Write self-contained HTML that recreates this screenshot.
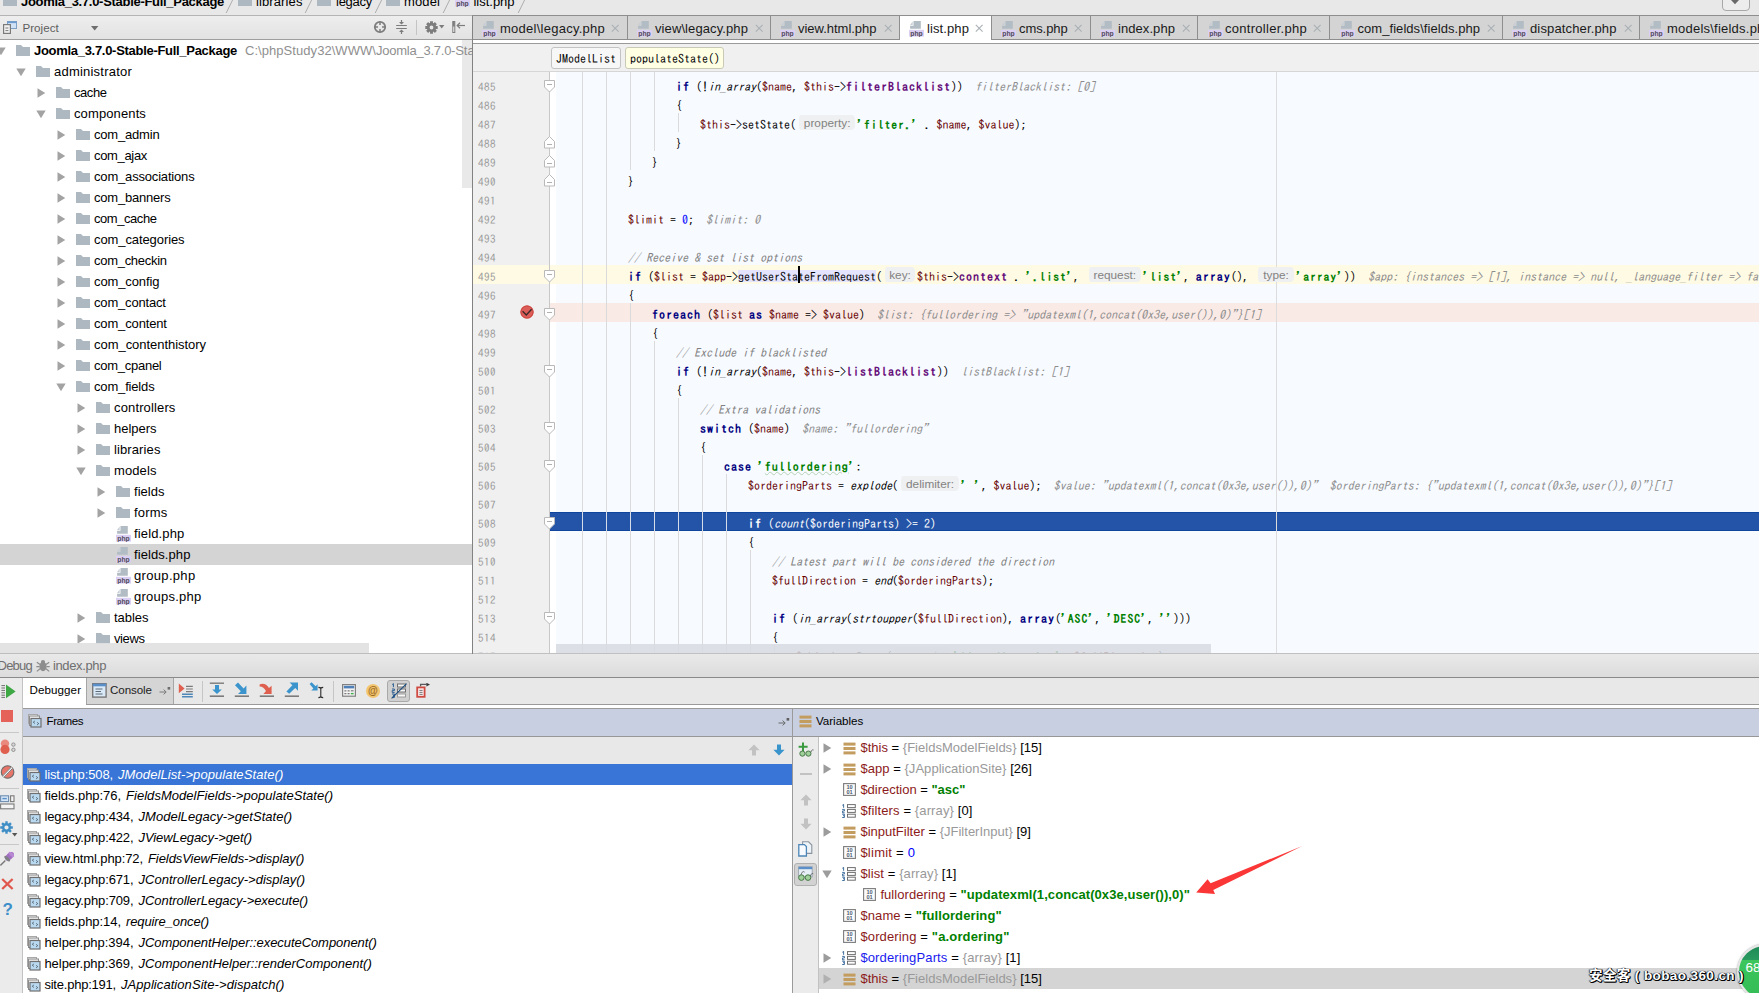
<!DOCTYPE html>
<html lang="en"><head><meta charset="utf-8"><title>PhpStorm debug - list.php</title>
<style>
html,body{margin:0;padding:0}
body{width:1759px;height:993px;overflow:hidden;position:relative;background:#ececec;font-family:"Liberation Sans",sans-serif;font-size:13px;color:#000}
.a{position:absolute;display:block}
.t{position:absolute;white-space:pre;line-height:21px;height:21px;font-size:13px}
.b{font-weight:bold}
.it{font-style:italic}
.s{font-size:11.6px}
.m{font-family:IPAGothic,"Liberation Mono",monospace;font-size:12px}
.ln{color:#999;line-height:19px;height:19px;font-size:11px;letter-spacing:.5px}
.cl{position:absolute;white-space:pre;font-family:IPAGothic,"Liberation Mono",monospace;font-size:12px;line-height:19px;height:19px;color:#000}
.cl .k{font-weight:bold;color:#000080;letter-spacing:1px}
.cl .v{color:#660000}
.cl .f{font-weight:bold;color:#660e7a;letter-spacing:1px}
.cl .s,.cl .sw{font-weight:bold;color:#008000;letter-spacing:1px}
.cl .sw{text-decoration:underline wavy #b5d1b5 1px;text-underline-offset:0px}
.cl .n{color:#0000ff}
.cl .c{font-style:italic;color:#808080}
.cl .i{font-style:italic}
.cl .u{background:#e4e4ff}
.cl .h{font-style:italic;color:#8c8c8c}
.ph{display:inline-block;box-sizing:border-box;height:15px;line-height:17px;vertical-align:top;margin-top:0;text-align:center;font-family:"Liberation Sans",sans-serif;font-size:11.8px;color:#828282;background:#eff0f1;background-clip:padding-box;border-left:3px solid transparent;border-right:2px solid transparent;border-radius:5px;letter-spacing:0}
.ex,.ex .k,.ex .v,.ex .n,.ex .i{color:#fff}
.vn{color:#8c1a1a}.vg{color:#999}.vs{color:#008000;font-weight:bold}.vb{color:#0000ff}.vc{color:#1a1aee}
.wm{font-family:"Liberation Sans","Noto Sans CJK SC",sans-serif;font-weight:bold;font-size:13.5px;color:#fff;text-shadow:1px 1px 0 #000,1px 0 0 #000,0 1px 0 #000,0 0 1px #000,-1px 0 1px rgba(0,0,0,.5)}
</style></head>
<body>
<div class="a" style="left:0px;top:0px;width:1759px;height:15px;background:#e8e8e8;"></div>
<div class="a" style="left:0px;top:15px;width:472px;height:1px;background:#b4b4b4;"></div>
<div class="a" style="left:472px;top:15px;width:1287px;height:1px;background:#8e8e8e;"></div>
<svg class="a" style="left:3px;top:-5px" width="14" height="11" viewBox="0 0 14 11"><path d="M0 0h5l2 2h7v9H0z" fill="#adb8c0"/></svg>
<span class="t b" style="left:21px;top:-9px;letter-spacing:-0.295px;">Joomla_3.7.0-Stable-Full_Package</span>
<svg class="a" style="left:225px;top:0px" width="9" height="14" viewBox="0 0 9 14"><path d="M7.6 0L1.2 13" stroke="#adadad" stroke-width="1" fill="none"/></svg>
<svg class="a" style="left:238px;top:-5px" width="14" height="11" viewBox="0 0 14 11"><path d="M0 0h5l2 2h7v9H0z" fill="#adb8c0"/></svg>
<span class="t " style="left:256px;top:-9px;letter-spacing:0.109px;">libraries</span>
<svg class="a" style="left:304px;top:0px" width="9" height="14" viewBox="0 0 9 14"><path d="M7.6 0L1.2 13" stroke="#adadad" stroke-width="1" fill="none"/></svg>
<svg class="a" style="left:317px;top:-5px" width="14" height="11" viewBox="0 0 14 11"><path d="M0 0h5l2 2h7v9H0z" fill="#adb8c0"/></svg>
<span class="t " style="left:336px;top:-9px;letter-spacing:-0.263px;">legacy</span>
<svg class="a" style="left:374px;top:0px" width="9" height="14" viewBox="0 0 9 14"><path d="M7.6 0L1.2 13" stroke="#adadad" stroke-width="1" fill="none"/></svg>
<svg class="a" style="left:386px;top:-5px" width="14" height="11" viewBox="0 0 14 11"><path d="M0 0h5l2 2h7v9H0z" fill="#adb8c0"/></svg>
<span class="t " style="left:404px;top:-9px;letter-spacing:0.116px;">model</span>
<svg class="a" style="left:442px;top:0px" width="9" height="14" viewBox="0 0 9 14"><path d="M7.6 0L1.2 13" stroke="#adadad" stroke-width="1" fill="none"/></svg>
<svg class="a" style="left:455px;top:-9px" width="15" height="16" viewBox="0 0 15 16"><path d="M4.5 0H11.8V7.7H1.1V4.7H4.5z" fill="#b2bcc4"/><path d="M1.1 3.9L3.7 0.5V3.9z" fill="#c6ced5"/><rect x="0" y="8.8" width="15" height="6.8" fill="#dccff4"/><text x="7.5" y="14.5" font-family="Liberation Sans,sans-serif" font-size="8" font-weight="bold" fill="#4f4a58" text-anchor="middle" textLength="12.4" lengthAdjust="spacingAndGlyphs">php</text></svg>
<span class="t " style="left:473.5px;top:-9px;letter-spacing:-0.025px;">list.php</span>
<svg class="a" style="left:517px;top:0px" width="9" height="14" viewBox="0 0 9 14"><path d="M7.6 0L1.2 13" stroke="#adadad" stroke-width="1" fill="none"/></svg>
<div class="a" style="left:1722px;top:-6px;width:28px;height:17px;background:#ededed;border:1px solid #a8a8a8;border-radius:4px;box-sizing:border-box;"></div>
<svg class="a" style="left:1730px;top:0px" width="10" height="5" viewBox="0 0 10 5"><path d="M1 0H9L5 4.2z" fill="#6a6a6a"/></svg>
<div class="a" style="left:0px;top:16px;width:472px;height:23px;background:linear-gradient(#eeeeee,#e2e2e2);"></div>
<div class="a" style="left:0px;top:39px;width:472px;height:1px;background:#9e9e9e;"></div>
<svg class="a" style="left:3px;top:20px" width="15" height="14" viewBox="0 0 15 14"><rect x="4.5" y="1.5" width="9" height="7" fill="#cfe2f5" stroke="#7d9fc4"/><rect x="4.5" y="1.5" width="9" height="1.6" fill="#6d9bd0"/><rect x="0.6" y="4.6" width="6.8" height="8.8" fill="#f2f2f2" stroke="#7a7a7a" stroke-width="1.2"/><path d="M2.4 8H5.4M2.4 10.6H5.4" stroke="#7a7a7a" stroke-width="1"/></svg>
<span class="t s" style="left:22.5px;top:16.5px;letter-spacing:0.015px;color:#5e5e5e;">Project</span>
<svg class="a" style="left:91px;top:26px" width="8" height="5" viewBox="0 0 8 5"><path d="M0 0H7.4L3.7 4.4z" fill="#6e6e6e"/></svg>
<svg class="a" style="left:373px;top:20px" width="14" height="14" viewBox="0 0 14 14"><circle cx="7" cy="7" r="5.2" fill="none" stroke="#7d7d7d" stroke-width="1.8"/><path d="M7 1.5V5M7 9V12.5M1.5 7H5M9 7H12.5" stroke="#7d7d7d" stroke-width="1.5"/></svg>
<svg class="a" style="left:395px;top:20px" width="13" height="14" viewBox="0 0 13 14"><path d="M1.2 5.5H11.8M1.2 8.5H11.8" stroke="#7d7d7d" stroke-width="1"/><path d="M6.5 0V4M6.5 10V14" stroke="#7d7d7d" stroke-width="1.2"/><path d="M4 2L6.5 4.6L9 2zM4 12L6.5 9.4L9 12z" fill="#7d7d7d"/></svg>
<div class="a" style="left:416px;top:20px;width:1px;height:15px;background:#c4c4c4;"></div>
<svg class="a" style="left:425px;top:20.5px" width="13" height="13" viewBox="0 0 13 13"><path d="M10.10 6.50L12.70 6.50M9.05 9.05L10.88 10.88M6.50 10.10L6.50 12.70M3.95 9.05L2.12 10.88M2.90 6.50L0.30 6.50M3.95 3.95L2.12 2.12M6.50 2.90L6.50 0.30M9.05 3.95L10.88 2.12" stroke="#7d7d7d" stroke-width="2.9"/><circle cx="6.5" cy="6.5" r="3.3" fill="none" stroke="#7d7d7d" stroke-width="2.8"/></svg>
<svg class="a" style="left:439px;top:25px" width="6" height="4" viewBox="0 0 6 4"><path d="M0 0H5.4L2.7 3.4z" fill="#7d7d7d"/></svg>
<svg class="a" style="left:452px;top:21px" width="14" height="12" viewBox="0 0 14 12"><rect x="0.8" y="0.5" width="2" height="11" fill="#f4f4f4" stroke="#7d7d7d" stroke-width="1"/><rect x="0.8" y="0.5" width="2" height="5" fill="#7d7d7d"/><path d="M5.5 4.5H13" stroke="#7d7d7d" stroke-width="1.2"/><path d="M8 1.8L5.2 4.5L8 7.2" stroke="#7d7d7d" stroke-width="1.2" fill="none"/></svg>
<div class="a" style="left:0px;top:40px;width:472px;height:613px;background:#ffffff;"></div>
<div class="a" style="left:462px;top:40px;width:10px;height:148px;background:#e9e9e9;"></div>
<svg class="a" style="left:-4px;top:47px" width="10" height="9" viewBox="0 0 10 9"><path d="M0.3 0.5H9.7L5 8.3z" fill="#a3a3a3"/></svg>
<svg class="a" style="left:16px;top:45px" width="14" height="11" viewBox="0 0 14 11"><path d="M0 0h5l2 2h7v9H0z" fill="#adb8c0"/></svg>
<span class="t b" style="left:34px;top:40px;letter-spacing:-0.295px;">Joomla_3.7.0-Stable-Full_Package</span>
<span class="t " style="left:245px;top:40px;letter-spacing:0.053px;color:#8f8f8f;">C:\phpStudy32\WWW\</span>
<span class="t " style="left:376px;top:40px;letter-spacing:-0.245px;color:#8f8f8f;">Joomla_3.7.0-</span>
<span class="t " style="left:455.2px;top:40px;color:#8f8f8f;">Stable-Full_Package</span>
<svg class="a" style="left:16px;top:68px" width="10" height="9" viewBox="0 0 10 9"><path d="M0.3 0.5H9.7L5 8.3z" fill="#a3a3a3"/></svg>
<svg class="a" style="left:36px;top:66px" width="14" height="11" viewBox="0 0 14 11"><path d="M0 0h5l2 2h7v9H0z" fill="#adb8c0"/></svg>
<span class="t " style="left:54px;top:61px;letter-spacing:0.22px;">administrator</span>
<svg class="a" style="left:37px;top:87.5px" width="9" height="10" viewBox="0 0 9 10"><path d="M0.5 0.3L8.3 5L0.5 9.7z" fill="#a3a3a3"/></svg>
<svg class="a" style="left:56px;top:87px" width="14" height="11" viewBox="0 0 14 11"><path d="M0 0h5l2 2h7v9H0z" fill="#adb8c0"/></svg>
<span class="t " style="left:74px;top:82px;letter-spacing:-0.441px;">cache</span>
<svg class="a" style="left:36px;top:110px" width="10" height="9" viewBox="0 0 10 9"><path d="M0.3 0.5H9.7L5 8.3z" fill="#a3a3a3"/></svg>
<svg class="a" style="left:56px;top:108px" width="14" height="11" viewBox="0 0 14 11"><path d="M0 0h5l2 2h7v9H0z" fill="#adb8c0"/></svg>
<span class="t " style="left:74px;top:103px;letter-spacing:0.117px;">components</span>
<svg class="a" style="left:57px;top:129.5px" width="9" height="10" viewBox="0 0 9 10"><path d="M0.5 0.3L8.3 5L0.5 9.7z" fill="#a3a3a3"/></svg>
<svg class="a" style="left:76px;top:129px" width="14" height="11" viewBox="0 0 14 11"><path d="M0 0h5l2 2h7v9H0z" fill="#adb8c0"/></svg>
<span class="t " style="left:94px;top:124px;letter-spacing:-0.189px;">com_admin</span>
<svg class="a" style="left:57px;top:150.5px" width="9" height="10" viewBox="0 0 9 10"><path d="M0.5 0.3L8.3 5L0.5 9.7z" fill="#a3a3a3"/></svg>
<svg class="a" style="left:76px;top:150px" width="14" height="11" viewBox="0 0 14 11"><path d="M0 0h5l2 2h7v9H0z" fill="#adb8c0"/></svg>
<span class="t " style="left:94px;top:145px;letter-spacing:-0.33px;">com_ajax</span>
<svg class="a" style="left:57px;top:171.5px" width="9" height="10" viewBox="0 0 9 10"><path d="M0.5 0.3L8.3 5L0.5 9.7z" fill="#a3a3a3"/></svg>
<svg class="a" style="left:76px;top:171px" width="14" height="11" viewBox="0 0 14 11"><path d="M0 0h5l2 2h7v9H0z" fill="#adb8c0"/></svg>
<span class="t " style="left:94px;top:166px;letter-spacing:-0.177px;">com_associations</span>
<svg class="a" style="left:57px;top:192.5px" width="9" height="10" viewBox="0 0 9 10"><path d="M0.5 0.3L8.3 5L0.5 9.7z" fill="#a3a3a3"/></svg>
<svg class="a" style="left:76px;top:192px" width="14" height="11" viewBox="0 0 14 11"><path d="M0 0h5l2 2h7v9H0z" fill="#adb8c0"/></svg>
<span class="t " style="left:94px;top:187px;letter-spacing:-0.207px;">com_banners</span>
<svg class="a" style="left:57px;top:213.5px" width="9" height="10" viewBox="0 0 9 10"><path d="M0.5 0.3L8.3 5L0.5 9.7z" fill="#a3a3a3"/></svg>
<svg class="a" style="left:76px;top:213px" width="14" height="11" viewBox="0 0 14 11"><path d="M0 0h5l2 2h7v9H0z" fill="#adb8c0"/></svg>
<span class="t " style="left:94px;top:208px;letter-spacing:-0.443px;">com_cache</span>
<svg class="a" style="left:57px;top:234.5px" width="9" height="10" viewBox="0 0 9 10"><path d="M0.5 0.3L8.3 5L0.5 9.7z" fill="#a3a3a3"/></svg>
<svg class="a" style="left:76px;top:234px" width="14" height="11" viewBox="0 0 14 11"><path d="M0 0h5l2 2h7v9H0z" fill="#adb8c0"/></svg>
<span class="t " style="left:94px;top:229px;letter-spacing:-0.092px;">com_categories</span>
<svg class="a" style="left:57px;top:255.5px" width="9" height="10" viewBox="0 0 9 10"><path d="M0.5 0.3L8.3 5L0.5 9.7z" fill="#a3a3a3"/></svg>
<svg class="a" style="left:76px;top:255px" width="14" height="11" viewBox="0 0 14 11"><path d="M0 0h5l2 2h7v9H0z" fill="#adb8c0"/></svg>
<span class="t " style="left:94px;top:250px;letter-spacing:-0.289px;">com_checkin</span>
<svg class="a" style="left:57px;top:276.5px" width="9" height="10" viewBox="0 0 9 10"><path d="M0.5 0.3L8.3 5L0.5 9.7z" fill="#a3a3a3"/></svg>
<svg class="a" style="left:76px;top:276px" width="14" height="11" viewBox="0 0 14 11"><path d="M0 0h5l2 2h7v9H0z" fill="#adb8c0"/></svg>
<span class="t " style="left:94px;top:271px;letter-spacing:-0.108px;">com_config</span>
<svg class="a" style="left:57px;top:297.5px" width="9" height="10" viewBox="0 0 9 10"><path d="M0.5 0.3L8.3 5L0.5 9.7z" fill="#a3a3a3"/></svg>
<svg class="a" style="left:76px;top:297px" width="14" height="11" viewBox="0 0 14 11"><path d="M0 0h5l2 2h7v9H0z" fill="#adb8c0"/></svg>
<span class="t " style="left:94px;top:292px;letter-spacing:-0.173px;">com_contact</span>
<svg class="a" style="left:57px;top:318.5px" width="9" height="10" viewBox="0 0 9 10"><path d="M0.5 0.3L8.3 5L0.5 9.7z" fill="#a3a3a3"/></svg>
<svg class="a" style="left:76px;top:318px" width="14" height="11" viewBox="0 0 14 11"><path d="M0 0h5l2 2h7v9H0z" fill="#adb8c0"/></svg>
<span class="t " style="left:94px;top:313px;letter-spacing:-0.149px;">com_content</span>
<svg class="a" style="left:57px;top:339.5px" width="9" height="10" viewBox="0 0 9 10"><path d="M0.5 0.3L8.3 5L0.5 9.7z" fill="#a3a3a3"/></svg>
<svg class="a" style="left:76px;top:339px" width="14" height="11" viewBox="0 0 14 11"><path d="M0 0h5l2 2h7v9H0z" fill="#adb8c0"/></svg>
<span class="t " style="left:94px;top:334px;letter-spacing:-0.041px;">com_contenthistory</span>
<svg class="a" style="left:57px;top:360.5px" width="9" height="10" viewBox="0 0 9 10"><path d="M0.5 0.3L8.3 5L0.5 9.7z" fill="#a3a3a3"/></svg>
<svg class="a" style="left:76px;top:360px" width="14" height="11" viewBox="0 0 14 11"><path d="M0 0h5l2 2h7v9H0z" fill="#adb8c0"/></svg>
<span class="t " style="left:94px;top:355px;letter-spacing:-0.261px;">com_cpanel</span>
<svg class="a" style="left:56px;top:383px" width="10" height="9" viewBox="0 0 10 9"><path d="M0.3 0.5H9.7L5 8.3z" fill="#a3a3a3"/></svg>
<svg class="a" style="left:76px;top:381px" width="14" height="11" viewBox="0 0 14 11"><path d="M0 0h5l2 2h7v9H0z" fill="#adb8c0"/></svg>
<span class="t " style="left:94px;top:376px;letter-spacing:-0.164px;">com_fields</span>
<svg class="a" style="left:77px;top:402.5px" width="9" height="10" viewBox="0 0 9 10"><path d="M0.5 0.3L8.3 5L0.5 9.7z" fill="#a3a3a3"/></svg>
<svg class="a" style="left:96px;top:402px" width="14" height="11" viewBox="0 0 14 11"><path d="M0 0h5l2 2h7v9H0z" fill="#adb8c0"/></svg>
<span class="t " style="left:114px;top:397px;letter-spacing:0.139px;">controllers</span>
<svg class="a" style="left:77px;top:423.5px" width="9" height="10" viewBox="0 0 9 10"><path d="M0.5 0.3L8.3 5L0.5 9.7z" fill="#a3a3a3"/></svg>
<svg class="a" style="left:96px;top:423px" width="14" height="11" viewBox="0 0 14 11"><path d="M0 0h5l2 2h7v9H0z" fill="#adb8c0"/></svg>
<span class="t " style="left:114px;top:418px;letter-spacing:-0.02px;">helpers</span>
<svg class="a" style="left:77px;top:444.5px" width="9" height="10" viewBox="0 0 9 10"><path d="M0.5 0.3L8.3 5L0.5 9.7z" fill="#a3a3a3"/></svg>
<svg class="a" style="left:96px;top:444px" width="14" height="11" viewBox="0 0 14 11"><path d="M0 0h5l2 2h7v9H0z" fill="#adb8c0"/></svg>
<span class="t " style="left:114px;top:439px;letter-spacing:0.109px;">libraries</span>
<svg class="a" style="left:76px;top:467px" width="10" height="9" viewBox="0 0 10 9"><path d="M0.3 0.5H9.7L5 8.3z" fill="#a3a3a3"/></svg>
<svg class="a" style="left:96px;top:465px" width="14" height="11" viewBox="0 0 14 11"><path d="M0 0h5l2 2h7v9H0z" fill="#adb8c0"/></svg>
<span class="t " style="left:114px;top:460px;letter-spacing:0.096px;">models</span>
<svg class="a" style="left:97px;top:486.5px" width="9" height="10" viewBox="0 0 9 10"><path d="M0.5 0.3L8.3 5L0.5 9.7z" fill="#a3a3a3"/></svg>
<svg class="a" style="left:116px;top:486px" width="14" height="11" viewBox="0 0 14 11"><path d="M0 0h5l2 2h7v9H0z" fill="#adb8c0"/></svg>
<span class="t " style="left:134px;top:481px;letter-spacing:0.023px;">fields</span>
<svg class="a" style="left:97px;top:507.5px" width="9" height="10" viewBox="0 0 9 10"><path d="M0.5 0.3L8.3 5L0.5 9.7z" fill="#a3a3a3"/></svg>
<svg class="a" style="left:116px;top:507px" width="14" height="11" viewBox="0 0 14 11"><path d="M0 0h5l2 2h7v9H0z" fill="#adb8c0"/></svg>
<span class="t " style="left:134px;top:502px;letter-spacing:0.2px;">forms</span>
<svg class="a" style="left:116px;top:526.3px" width="15" height="16" viewBox="0 0 15 16"><path d="M4.5 0H11.8V7.7H1.1V4.7H4.5z" fill="#b2bcc4"/><path d="M1.1 3.9L3.7 0.5V3.9z" fill="#c6ced5"/><rect x="0" y="8.8" width="15" height="6.8" fill="#dccff4"/><text x="7.5" y="14.5" font-family="Liberation Sans,sans-serif" font-size="8" font-weight="bold" fill="#4f4a58" text-anchor="middle" textLength="12.4" lengthAdjust="spacingAndGlyphs">php</text></svg>
<span class="t " style="left:134px;top:523px;letter-spacing:0.149px;">field.php</span>
<div class="a" style="left:0px;top:544px;width:472px;height:21px;background:#d4d4d4;"></div>
<svg class="a" style="left:116px;top:547.3px" width="15" height="16" viewBox="0 0 15 16"><path d="M4.5 0H11.8V7.7H1.1V4.7H4.5z" fill="#b2bcc4"/><path d="M1.1 3.9L3.7 0.5V3.9z" fill="#c6ced5"/><rect x="0" y="8.8" width="15" height="6.8" fill="#dccff4"/><text x="7.5" y="14.5" font-family="Liberation Sans,sans-serif" font-size="8" font-weight="bold" fill="#4f4a58" text-anchor="middle" textLength="12.4" lengthAdjust="spacingAndGlyphs">php</text></svg>
<span class="t " style="left:134px;top:544px;letter-spacing:0.084px;">fields.php</span>
<svg class="a" style="left:116px;top:568.3px" width="15" height="16" viewBox="0 0 15 16"><path d="M4.5 0H11.8V7.7H1.1V4.7H4.5z" fill="#b2bcc4"/><path d="M1.1 3.9L3.7 0.5V3.9z" fill="#c6ced5"/><rect x="0" y="8.8" width="15" height="6.8" fill="#dccff4"/><text x="7.5" y="14.5" font-family="Liberation Sans,sans-serif" font-size="8" font-weight="bold" fill="#4f4a58" text-anchor="middle" textLength="12.4" lengthAdjust="spacingAndGlyphs">php</text></svg>
<span class="t " style="left:134px;top:565px;letter-spacing:0.326px;">group.php</span>
<svg class="a" style="left:116px;top:589.3px" width="15" height="16" viewBox="0 0 15 16"><path d="M4.5 0H11.8V7.7H1.1V4.7H4.5z" fill="#b2bcc4"/><path d="M1.1 3.9L3.7 0.5V3.9z" fill="#c6ced5"/><rect x="0" y="8.8" width="15" height="6.8" fill="#dccff4"/><text x="7.5" y="14.5" font-family="Liberation Sans,sans-serif" font-size="8" font-weight="bold" fill="#4f4a58" text-anchor="middle" textLength="12.4" lengthAdjust="spacingAndGlyphs">php</text></svg>
<span class="t " style="left:134px;top:586px;letter-spacing:0.244px;">groups.php</span>
<svg class="a" style="left:77px;top:612.5px" width="9" height="10" viewBox="0 0 9 10"><path d="M0.5 0.3L8.3 5L0.5 9.7z" fill="#a3a3a3"/></svg>
<svg class="a" style="left:96px;top:612px" width="14" height="11" viewBox="0 0 14 11"><path d="M0 0h5l2 2h7v9H0z" fill="#adb8c0"/></svg>
<span class="t " style="left:114px;top:607px;letter-spacing:-0.034px;">tables</span>
<svg class="a" style="left:77px;top:633.5px" width="9" height="10" viewBox="0 0 9 10"><path d="M0.5 0.3L8.3 5L0.5 9.7z" fill="#a3a3a3"/></svg>
<svg class="a" style="left:96px;top:633px" width="14" height="11" viewBox="0 0 14 11"><path d="M0 0h5l2 2h7v9H0z" fill="#adb8c0"/></svg>
<span class="t " style="left:114px;top:628px;letter-spacing:-0.403px;">views</span>
<svg class="a" style="left:77px;top:654.5px" width="9" height="10" viewBox="0 0 9 10"><path d="M0.5 0.3L8.3 5L0.5 9.7z" fill="#a3a3a3"/></svg>
<svg class="a" style="left:96px;top:654px" width="14" height="11" viewBox="0 0 14 11"><path d="M0 0h5l2 2h7v9H0z" fill="#adb8c0"/></svg>
<div class="a" style="left:0px;top:643px;width:369px;height:10px;background:rgba(225,225,225,0.93);"></div>
<div class="a" style="left:0px;top:653px;width:472px;height:1px;background:#bdbdbd;"></div>
<div class="a" style="left:472px;top:16px;width:1px;height:638px;background:#828282;"></div>
<div class="a" style="left:473px;top:16px;width:1286px;height:23px;background:#d4d4d4;"></div>
<div class="a" style="left:473px;top:39px;width:1286px;height:1px;background:#8e8e8e;"></div>
<div class="a" style="left:473px;top:40px;width:1286px;height:3px;background:#ffffff;"></div>
<div class="a" style="left:473px;top:43px;width:1286px;height:1px;background:#9a9a9a;"></div>
<svg class="a" style="left:482px;top:21.2px" width="15" height="16" viewBox="0 0 15 16"><path d="M4.5 0H11.8V7.7H1.1V4.7H4.5z" fill="#b2bcc4"/><path d="M1.1 3.9L3.7 0.5V3.9z" fill="#c6ced5"/><rect x="0" y="8.8" width="15" height="6.8" fill="#dccff4"/><text x="7.5" y="14.5" font-family="Liberation Sans,sans-serif" font-size="8" font-weight="bold" fill="#4f4a58" text-anchor="middle" textLength="12.4" lengthAdjust="spacingAndGlyphs">php</text></svg>
<span class="t " style="left:500px;top:18px;letter-spacing:0.254px;color:#1a1a1a;">model\legacy.php</span>
<svg class="a" style="left:611px;top:24.3px" width="9" height="9" viewBox="0 0 9 9"><path d="M0.8 0.8L7.6 7.6M7.6 0.8L0.8 7.6" stroke="#a9b0b4" stroke-width="1.1" fill="none"/></svg>
<div class="a" style="left:627px;top:16px;width:1px;height:23px;background:#8e8e8e;"></div>
<svg class="a" style="left:637px;top:21.2px" width="15" height="16" viewBox="0 0 15 16"><path d="M4.5 0H11.8V7.7H1.1V4.7H4.5z" fill="#b2bcc4"/><path d="M1.1 3.9L3.7 0.5V3.9z" fill="#c6ced5"/><rect x="0" y="8.8" width="15" height="6.8" fill="#dccff4"/><text x="7.5" y="14.5" font-family="Liberation Sans,sans-serif" font-size="8" font-weight="bold" fill="#4f4a58" text-anchor="middle" textLength="12.4" lengthAdjust="spacingAndGlyphs">php</text></svg>
<span class="t " style="left:655px;top:18px;letter-spacing:0.097px;color:#1a1a1a;">view\legacy.php</span>
<svg class="a" style="left:755px;top:24.3px" width="9" height="9" viewBox="0 0 9 9"><path d="M0.8 0.8L7.6 7.6M7.6 0.8L0.8 7.6" stroke="#a9b0b4" stroke-width="1.1" fill="none"/></svg>
<div class="a" style="left:770px;top:16px;width:1px;height:23px;background:#8e8e8e;"></div>
<svg class="a" style="left:780px;top:21.2px" width="15" height="16" viewBox="0 0 15 16"><path d="M4.5 0H11.8V7.7H1.1V4.7H4.5z" fill="#b2bcc4"/><path d="M1.1 3.9L3.7 0.5V3.9z" fill="#c6ced5"/><rect x="0" y="8.8" width="15" height="6.8" fill="#dccff4"/><text x="7.5" y="14.5" font-family="Liberation Sans,sans-serif" font-size="8" font-weight="bold" fill="#4f4a58" text-anchor="middle" textLength="12.4" lengthAdjust="spacingAndGlyphs">php</text></svg>
<span class="t " style="left:798px;top:18px;letter-spacing:-0.02px;color:#1a1a1a;">view.html.php</span>
<svg class="a" style="left:883.5px;top:24.3px" width="9" height="9" viewBox="0 0 9 9"><path d="M0.8 0.8L7.6 7.6M7.6 0.8L0.8 7.6" stroke="#a9b0b4" stroke-width="1.1" fill="none"/></svg>
<div class="a" style="left:899px;top:16px;width:1px;height:24px;background:#8e8e8e;"></div>
<div class="a" style="left:900px;top:16px;width:91px;height:27px;background:#ffffff;"></div>
<svg class="a" style="left:909px;top:21.2px" width="15" height="16" viewBox="0 0 15 16"><path d="M4.5 0H11.8V7.7H1.1V4.7H4.5z" fill="#b2bcc4"/><path d="M1.1 3.9L3.7 0.5V3.9z" fill="#c6ced5"/><rect x="0" y="8.8" width="15" height="6.8" fill="#dccff4"/><text x="7.5" y="14.5" font-family="Liberation Sans,sans-serif" font-size="8" font-weight="bold" fill="#4f4a58" text-anchor="middle" textLength="12.4" lengthAdjust="spacingAndGlyphs">php</text></svg>
<span class="t " style="left:927px;top:18px;letter-spacing:0.1px;color:#1a1a1a;">list.php</span>
<svg class="a" style="left:975px;top:24.3px" width="9" height="9" viewBox="0 0 9 9"><path d="M0.8 0.8L7.6 7.6M7.6 0.8L0.8 7.6" stroke="#a9b0b4" stroke-width="1.1" fill="none"/></svg>
<div class="a" style="left:991px;top:16px;width:1px;height:24px;background:#8e8e8e;"></div>
<svg class="a" style="left:1001px;top:21.2px" width="15" height="16" viewBox="0 0 15 16"><path d="M4.5 0H11.8V7.7H1.1V4.7H4.5z" fill="#b2bcc4"/><path d="M1.1 3.9L3.7 0.5V3.9z" fill="#c6ced5"/><rect x="0" y="8.8" width="15" height="6.8" fill="#dccff4"/><text x="7.5" y="14.5" font-family="Liberation Sans,sans-serif" font-size="8" font-weight="bold" fill="#4f4a58" text-anchor="middle" textLength="12.4" lengthAdjust="spacingAndGlyphs">php</text></svg>
<span class="t " style="left:1019px;top:18px;letter-spacing:-0.077px;color:#1a1a1a;">cms.php</span>
<svg class="a" style="left:1074px;top:24.3px" width="9" height="9" viewBox="0 0 9 9"><path d="M0.8 0.8L7.6 7.6M7.6 0.8L0.8 7.6" stroke="#a9b0b4" stroke-width="1.1" fill="none"/></svg>
<div class="a" style="left:1090px;top:16px;width:1px;height:23px;background:#8e8e8e;"></div>
<svg class="a" style="left:1100px;top:21.2px" width="15" height="16" viewBox="0 0 15 16"><path d="M4.5 0H11.8V7.7H1.1V4.7H4.5z" fill="#b2bcc4"/><path d="M1.1 3.9L3.7 0.5V3.9z" fill="#c6ced5"/><rect x="0" y="8.8" width="15" height="6.8" fill="#dccff4"/><text x="7.5" y="14.5" font-family="Liberation Sans,sans-serif" font-size="8" font-weight="bold" fill="#4f4a58" text-anchor="middle" textLength="12.4" lengthAdjust="spacingAndGlyphs">php</text></svg>
<span class="t " style="left:1118px;top:18px;letter-spacing:0.068px;color:#1a1a1a;">index.php</span>
<svg class="a" style="left:1181.5px;top:24.3px" width="9" height="9" viewBox="0 0 9 9"><path d="M0.8 0.8L7.6 7.6M7.6 0.8L0.8 7.6" stroke="#a9b0b4" stroke-width="1.1" fill="none"/></svg>
<div class="a" style="left:1197px;top:16px;width:1px;height:23px;background:#8e8e8e;"></div>
<svg class="a" style="left:1207.5px;top:21.2px" width="15" height="16" viewBox="0 0 15 16"><path d="M4.5 0H11.8V7.7H1.1V4.7H4.5z" fill="#b2bcc4"/><path d="M1.1 3.9L3.7 0.5V3.9z" fill="#c6ced5"/><rect x="0" y="8.8" width="15" height="6.8" fill="#dccff4"/><text x="7.5" y="14.5" font-family="Liberation Sans,sans-serif" font-size="8" font-weight="bold" fill="#4f4a58" text-anchor="middle" textLength="12.4" lengthAdjust="spacingAndGlyphs">php</text></svg>
<span class="t " style="left:1225px;top:18px;letter-spacing:0.281px;color:#1a1a1a;">controller.php</span>
<svg class="a" style="left:1313px;top:24.3px" width="9" height="9" viewBox="0 0 9 9"><path d="M0.8 0.8L7.6 7.6M7.6 0.8L0.8 7.6" stroke="#a9b0b4" stroke-width="1.1" fill="none"/></svg>
<div class="a" style="left:1329px;top:16px;width:1px;height:23px;background:#8e8e8e;"></div>
<svg class="a" style="left:1340px;top:21.2px" width="15" height="16" viewBox="0 0 15 16"><path d="M4.5 0H11.8V7.7H1.1V4.7H4.5z" fill="#b2bcc4"/><path d="M1.1 3.9L3.7 0.5V3.9z" fill="#c6ced5"/><rect x="0" y="8.8" width="15" height="6.8" fill="#dccff4"/><text x="7.5" y="14.5" font-family="Liberation Sans,sans-serif" font-size="8" font-weight="bold" fill="#4f4a58" text-anchor="middle" textLength="12.4" lengthAdjust="spacingAndGlyphs">php</text></svg>
<span class="t " style="left:1357.5px;top:18px;letter-spacing:0.052px;color:#1a1a1a;">com_fields\fields.php</span>
<svg class="a" style="left:1486.5px;top:24.3px" width="9" height="9" viewBox="0 0 9 9"><path d="M0.8 0.8L7.6 7.6M7.6 0.8L0.8 7.6" stroke="#a9b0b4" stroke-width="1.1" fill="none"/></svg>
<div class="a" style="left:1502px;top:16px;width:1px;height:23px;background:#8e8e8e;"></div>
<svg class="a" style="left:1512px;top:21.2px" width="15" height="16" viewBox="0 0 15 16"><path d="M4.5 0H11.8V7.7H1.1V4.7H4.5z" fill="#b2bcc4"/><path d="M1.1 3.9L3.7 0.5V3.9z" fill="#c6ced5"/><rect x="0" y="8.8" width="15" height="6.8" fill="#dccff4"/><text x="7.5" y="14.5" font-family="Liberation Sans,sans-serif" font-size="8" font-weight="bold" fill="#4f4a58" text-anchor="middle" textLength="12.4" lengthAdjust="spacingAndGlyphs">php</text></svg>
<span class="t " style="left:1530px;top:18px;letter-spacing:0.144px;color:#1a1a1a;">dispatcher.php</span>
<svg class="a" style="left:1623.7px;top:24.3px" width="9" height="9" viewBox="0 0 9 9"><path d="M0.8 0.8L7.6 7.6M7.6 0.8L0.8 7.6" stroke="#a9b0b4" stroke-width="1.1" fill="none"/></svg>
<div class="a" style="left:1639px;top:16px;width:1px;height:23px;background:#8e8e8e;"></div>
<svg class="a" style="left:1649px;top:21.2px" width="15" height="16" viewBox="0 0 15 16"><path d="M4.5 0H11.8V7.7H1.1V4.7H4.5z" fill="#b2bcc4"/><path d="M1.1 3.9L3.7 0.5V3.9z" fill="#c6ced5"/><rect x="0" y="8.8" width="15" height="6.8" fill="#dccff4"/><text x="7.5" y="14.5" font-family="Liberation Sans,sans-serif" font-size="8" font-weight="bold" fill="#4f4a58" text-anchor="middle" textLength="12.4" lengthAdjust="spacingAndGlyphs">php</text></svg>
<span class="t " style="left:1667px;top:18px;letter-spacing:0.225px;color:#1a1a1a;">models\fields.php</span>
<svg class="a" style="left:1786px;top:24.3px" width="9" height="9" viewBox="0 0 9 9"><path d="M0.8 0.8L7.6 7.6M7.6 0.8L0.8 7.6" stroke="#a9b0b4" stroke-width="1.1" fill="none"/></svg>
<div class="a" style="left:473px;top:44px;width:1286px;height:27px;background:#f0f0f0;"></div>
<div class="a" style="left:473px;top:71px;width:1286px;height:1px;background:#d6d6d6;"></div>
<div class="a" style="left:551px;top:47px;width:70px;height:22px;background:#f7f7f7;border:1px solid #c3c3c3;border-radius:3px;box-sizing:border-box;"></div>
<div class="a" style="left:625px;top:47px;width:99px;height:22px;background:#ffffe4;border:1px solid #c9c9b6;border-radius:3px;box-sizing:border-box;"></div>
<span class="t m" style="left:556px;top:48.5px;line-height:19px;height:19px;">JModelList</span>
<span class="t m" style="left:630px;top:48.5px;line-height:19px;height:19px;">populateState()</span>
<div class="a" style="left:473px;top:72px;width:77px;height:581px;background:#f0f0f0;"></div>
<div class="a" style="left:550px;top:72px;width:6px;height:581px;background:#ffffff;"></div>
<div class="a" style="left:556px;top:72px;width:1203px;height:581px;background:#f7faff;"></div>
<div class="a" style="left:473px;top:265px;width:1286px;height:19px;background:#fffae3;"></div>
<div class="a" style="left:550px;top:303px;width:1209px;height:19px;background:#faeae6;"></div>
<div class="a" style="left:550px;top:512px;width:1209px;height:19px;background:#2454a8;border-top:1px solid #0f459c;border-bottom:1px solid #0f459c;box-sizing:border-box;"></div>
<div class="a" style="left:549px;top:72px;width:1px;height:581px;background:#c8c8c8;"></div>
<div class="a" style="left:1276px;top:72px;width:1px;height:581px;background:#dcdcdc;"></div>
<div class="a" style="left:582px;top:72px;width:1px;height:581px;background:#dadada;"></div>
<div class="a" style="left:606px;top:72px;width:1px;height:581px;background:#dadada;"></div>
<div class="a" style="left:630px;top:72px;width:1px;height:98px;background:#dadada;"></div>
<div class="a" style="left:630px;top:303px;width:1px;height:350px;background:#dadada;"></div>
<div class="a" style="left:654px;top:72px;width:1px;height:79px;background:#dadada;"></div>
<div class="a" style="left:654px;top:341px;width:1px;height:312px;background:#dadada;"></div>
<div class="a" style="left:678px;top:113px;width:1px;height:19px;background:#dadada;"></div>
<div class="a" style="left:678px;top:398px;width:1px;height:255px;background:#dadada;"></div>
<div class="a" style="left:702px;top:455px;width:1px;height:198px;background:#dadada;"></div>
<div class="a" style="left:726px;top:474px;width:1px;height:179px;background:#dadada;"></div>
<div class="a" style="left:750px;top:550px;width:1px;height:103px;background:#dadada;"></div>
<div class="a" style="left:774px;top:645px;width:1px;height:8px;background:#dadada;"></div>
<div class="a" style="left:582px;top:513px;width:1px;height:17px;background:#d5dcea;"></div>
<div class="a" style="left:606px;top:513px;width:1px;height:17px;background:#d5dcea;"></div>
<div class="a" style="left:630px;top:513px;width:1px;height:17px;background:#d5dcea;"></div>
<div class="a" style="left:654px;top:513px;width:1px;height:17px;background:#d5dcea;"></div>
<div class="a" style="left:678px;top:513px;width:1px;height:17px;background:#d5dcea;"></div>
<div class="a" style="left:702px;top:513px;width:1px;height:17px;background:#d5dcea;"></div>
<div class="a" style="left:726px;top:513px;width:1px;height:17px;background:#d5dcea;"></div>
<span class="t m ln" style="left:478px;top:77px;">485</span>
<span class="t m ln" style="left:478px;top:96px;">486</span>
<span class="t m ln" style="left:478px;top:115px;">487</span>
<span class="t m ln" style="left:478px;top:134px;">488</span>
<span class="t m ln" style="left:478px;top:153px;">489</span>
<span class="t m ln" style="left:478px;top:172px;">490</span>
<span class="t m ln" style="left:478px;top:191px;">491</span>
<span class="t m ln" style="left:478px;top:210px;">492</span>
<span class="t m ln" style="left:478px;top:229px;">493</span>
<span class="t m ln" style="left:478px;top:248px;">494</span>
<span class="t m ln" style="left:478px;top:267px;">495</span>
<span class="t m ln" style="left:478px;top:286px;">496</span>
<span class="t m ln" style="left:478px;top:305px;">497</span>
<span class="t m ln" style="left:478px;top:324px;">498</span>
<span class="t m ln" style="left:478px;top:343px;">499</span>
<span class="t m ln" style="left:478px;top:362px;">500</span>
<span class="t m ln" style="left:478px;top:381px;">501</span>
<span class="t m ln" style="left:478px;top:400px;">502</span>
<span class="t m ln" style="left:478px;top:419px;">503</span>
<span class="t m ln" style="left:478px;top:438px;">504</span>
<span class="t m ln" style="left:478px;top:457px;">505</span>
<span class="t m ln" style="left:478px;top:476px;">506</span>
<span class="t m ln" style="left:478px;top:495px;">507</span>
<span class="t m ln" style="left:478px;top:514px;">508</span>
<span class="t m ln" style="left:478px;top:533px;">509</span>
<span class="t m ln" style="left:478px;top:552px;">510</span>
<span class="t m ln" style="left:478px;top:571px;">511</span>
<span class="t m ln" style="left:478px;top:590px;">512</span>
<span class="t m ln" style="left:478px;top:609px;">513</span>
<span class="t m ln" style="left:478px;top:628px;">514</span>
<span class="t m ln" style="left:478px;top:647px;">515</span>
<svg class="a" style="left:544px;top:80px" width="11" height="13" viewBox="0 0 11 13"><path d="M0.5 0.5H10.5V7L5.5 12L0.5 7z" fill="#ffffff" stroke="#b9b9b9" stroke-width="1"/><path d="M3 4.5H8" stroke="#b0b0b0" stroke-width="1"/></svg>
<svg class="a" style="left:544px;top:270px" width="11" height="13" viewBox="0 0 11 13"><path d="M0.5 0.5H10.5V7L5.5 12L0.5 7z" fill="#ffffff" stroke="#b9b9b9" stroke-width="1"/><path d="M3 4.5H8" stroke="#b0b0b0" stroke-width="1"/></svg>
<svg class="a" style="left:544px;top:308px" width="11" height="13" viewBox="0 0 11 13"><path d="M0.5 0.5H10.5V7L5.5 12L0.5 7z" fill="#ffffff" stroke="#b9b9b9" stroke-width="1"/><path d="M3 4.5H8" stroke="#b0b0b0" stroke-width="1"/></svg>
<svg class="a" style="left:544px;top:365px" width="11" height="13" viewBox="0 0 11 13"><path d="M0.5 0.5H10.5V7L5.5 12L0.5 7z" fill="#ffffff" stroke="#b9b9b9" stroke-width="1"/><path d="M3 4.5H8" stroke="#b0b0b0" stroke-width="1"/></svg>
<svg class="a" style="left:544px;top:422px" width="11" height="13" viewBox="0 0 11 13"><path d="M0.5 0.5H10.5V7L5.5 12L0.5 7z" fill="#ffffff" stroke="#b9b9b9" stroke-width="1"/><path d="M3 4.5H8" stroke="#b0b0b0" stroke-width="1"/></svg>
<svg class="a" style="left:544px;top:460px" width="11" height="13" viewBox="0 0 11 13"><path d="M0.5 0.5H10.5V7L5.5 12L0.5 7z" fill="#ffffff" stroke="#b9b9b9" stroke-width="1"/><path d="M3 4.5H8" stroke="#b0b0b0" stroke-width="1"/></svg>
<svg class="a" style="left:544px;top:517px" width="11" height="13" viewBox="0 0 11 13"><path d="M0.5 0.5H10.5V7L5.5 12L0.5 7z" fill="#ffffff" stroke="#b9b9b9" stroke-width="1"/><path d="M3 4.5H8" stroke="#b0b0b0" stroke-width="1"/></svg>
<svg class="a" style="left:544px;top:612px" width="11" height="13" viewBox="0 0 11 13"><path d="M0.5 0.5H10.5V7L5.5 12L0.5 7z" fill="#ffffff" stroke="#b9b9b9" stroke-width="1"/><path d="M3 4.5H8" stroke="#b0b0b0" stroke-width="1"/></svg>
<svg class="a" style="left:544px;top:136px" width="11" height="13" viewBox="0 0 11 13"><path d="M0.5 12H10.5V5.5L5.5 0.5L0.5 5.5z" fill="#ffffff" stroke="#b9b9b9" stroke-width="1"/><path d="M3 8.5H8" stroke="#b0b0b0" stroke-width="1"/></svg>
<svg class="a" style="left:544px;top:155px" width="11" height="13" viewBox="0 0 11 13"><path d="M0.5 12H10.5V5.5L5.5 0.5L0.5 5.5z" fill="#ffffff" stroke="#b9b9b9" stroke-width="1"/><path d="M3 8.5H8" stroke="#b0b0b0" stroke-width="1"/></svg>
<svg class="a" style="left:544px;top:174px" width="11" height="13" viewBox="0 0 11 13"><path d="M0.5 12H10.5V5.5L5.5 0.5L0.5 5.5z" fill="#ffffff" stroke="#b9b9b9" stroke-width="1"/><path d="M3 8.5H8" stroke="#b0b0b0" stroke-width="1"/></svg>
<svg class="a" style="left:520px;top:305px" width="14" height="14" viewBox="0 0 14 14"><circle cx="7" cy="7" r="6.6" fill="#dd5d58"/><circle cx="7" cy="7" r="6.1" fill="none" stroke="#c9463f" stroke-width="1"/><path d="M2.6 6.2L6.3 10L11.6 4.2" stroke="#3c2b2b" stroke-width="1.4" fill="none"/></svg>
<div class="cl" style="left:676px;top:77px"><span class="k">if</span> (!<span class="i">in_array</span>(<span class="v">$name</span>, <span class="v">$this</span>-&gt;<span class="f">filterBlacklist</span>))  <span class="h">filterBlacklist: [0]</span></div>
<div class="cl" style="left:676px;top:96px">{</div>
<div class="cl" style="left:700px;top:115px"><span class="v">$this</span>-&gt;setState(<span class="ph" style="width:61.3px">property:</span><span class="s">'filter.'</span> . <span class="v">$name</span>, <span class="v">$value</span>);</div>
<div class="cl" style="left:676px;top:134px">}</div>
<div class="cl" style="left:652px;top:153px">}</div>
<div class="cl" style="left:628px;top:172px">}</div>
<div class="cl" style="left:628px;top:210px"><span class="v">$limit</span> = <span class="n">0</span>;  <span class="h">$limit: 0</span></div>
<div class="cl" style="left:628px;top:248px"><span class="c">// Receive &amp; set list options</span></div>
<div class="cl" style="left:628px;top:267px"><span class="k">if</span> (<span class="v">$list</span> = <span class="v">$app</span>-&gt;<span class="u">getUserStateFromRequest</span>(<span class="ph" style="width:35px">key:</span><span class="v">$this</span>-&gt;<span class="f">context</span> . <span class="s">'.list'</span>, <span class="ph" style="width:57.5px">request:</span><span class="s">'list'</span>, <span class="k">array</span>(), <span class="ph" style="width:41.5px">type:</span><span class="s">'array'</span>))  <span class="h">$app: {instances =&gt; [1], instance =&gt; null, _language_filter =&gt; false, _languages</span></div>
<div class="cl" style="left:628px;top:286px">{</div>
<div class="cl" style="left:652px;top:305px"><span class="k">foreach</span> (<span class="v">$list</span> <span class="k">as</span> <span class="v">$name</span> =&gt; <span class="v">$value</span>)  <span class="h">$list: {fullordering =&gt; "updatexml(1,concat(0x3e,user()),0)"}[1]</span></div>
<div class="cl" style="left:652px;top:324px">{</div>
<div class="cl" style="left:676px;top:343px"><span class="c">// Exclude if blacklisted</span></div>
<div class="cl" style="left:676px;top:362px"><span class="k">if</span> (!<span class="i">in_array</span>(<span class="v">$name</span>, <span class="v">$this</span>-&gt;<span class="f">listBlacklist</span>))  <span class="h">listBlacklist: [1]</span></div>
<div class="cl" style="left:676px;top:381px">{</div>
<div class="cl" style="left:700px;top:400px"><span class="c">// Extra validations</span></div>
<div class="cl" style="left:700px;top:419px"><span class="k">switch</span> (<span class="v">$name</span>)  <span class="h">$name: "fullordering"</span></div>
<div class="cl" style="left:700px;top:438px">{</div>
<div class="cl" style="left:724px;top:457px"><span class="k">case</span> <span class="s">'</span><span class="sw">fullordering</span><span class="s">'</span>:</div>
<div class="cl" style="left:748px;top:476px"><span class="v">$orderingParts</span> = <span class="i">explode</span>(<span class="ph" style="width:63px">delimiter:</span><span class="s">' '</span>, <span class="v">$value</span>);  <span class="h">$value: "updatexml(1,concat(0x3e,user()),0)"  $orderingParts: {"updatexml(1,concat(0x3e,user()),0)"}[1]</span></div>
<div class="cl ex" style="left:748px;top:514px"><span class="k">if</span> (<span class="i">count</span>(<span class="v">$orderingParts</span>) &gt;= <span class="n">2</span>)</div>
<div class="cl" style="left:748px;top:533px">{</div>
<div class="cl" style="left:772px;top:552px"><span class="c">// Latest part will be considered the direction</span></div>
<div class="cl" style="left:772px;top:571px"><span class="v">$fullDirection</span> = <span class="i">end</span>(<span class="v">$orderingParts</span>);</div>
<div class="cl" style="left:772px;top:609px"><span class="k">if</span> (<span class="i">in_array</span>(<span class="i">strtoupper</span>(<span class="v">$fullDirection</span>), <span class="k">array</span>(<span class="s">'ASC'</span>, <span class="s">'DESC'</span>, <span class="s">''</span>)))</div>
<div class="cl" style="left:772px;top:628px">{</div>
<div class="cl" style="left:796px;top:647px"><span class="v">$this</span>-&gt;setState(<span class="ph" style="width:61.3px">property:</span><span class="s">'list.direction'</span>, <span class="v">$fullDirection</span>);</div>
<div class="a" style="left:798px;top:266px;width:2px;height:17px;background:#000000;"></div>
<div class="a" style="left:556px;top:644px;width:655px;height:9px;background:rgba(215,219,226,0.85);"></div>
<div class="a" style="left:473px;top:653px;width:1286px;height:1px;background:#c0c0c0;"></div>
<div class="a" style="left:0px;top:654px;width:1759px;height:23px;background:linear-gradient(#e9e9e9,#dcdcdc);"></div>
<div class="a" style="left:0px;top:677px;width:1759px;height:1px;background:#8a8a8a;"></div>
<span class="t " style="left:-2.5px;top:654.5px;letter-spacing:-0.762px;color:#6f6f6f;">Debug</span>
<svg class="a" style="left:36px;top:659px" width="14" height="14" viewBox="0 0 14 14"><ellipse cx="7" cy="7.6" rx="3.6" ry="4.6" fill="#8d8d8d"/><circle cx="7" cy="3" r="2.1" fill="#8d8d8d"/><path d="M0.8 3.2L4 5.6M13.2 3.2L10 5.6M0.3 7.6H3.6M13.7 7.6H10.4M0.8 12.4L4 9.8M13.2 12.4L10 9.8" stroke="#8d8d8d" stroke-width="1.2"/></svg>
<span class="t " style="left:53px;top:654.5px;letter-spacing:-0.377px;color:#6f6f6f;">index.php</span>
<div class="a" style="left:0px;top:678px;width:1759px;height:26px;background:#e8e8e8;"></div>
<div class="a" style="left:23px;top:704px;width:1736px;height:1px;background:#9a9a9a;"></div>
<div class="a" style="left:23px;top:705px;width:1736px;height:3px;background:#ffffff;"></div>
<div class="a" style="left:0px;top:678px;width:22px;height:315px;background:#ebebeb;"></div>
<div class="a" style="left:22px;top:678px;width:1px;height:315px;background:#c2c2c2;"></div>
<div class="a" style="left:23px;top:678px;width:63px;height:30px;background:#ffffff;"></div>
<span class="t s" style="left:29.5px;top:678.5px;letter-spacing:0.085px;color:#000;">Debugger</span>
<div class="a" style="left:86px;top:678px;width:88px;height:26px;background:#d5d5d5;border-left:1px solid #a6a6a6;border-right:1px solid #a6a6a6;box-sizing:border-box;"></div>
<svg class="a" style="left:92px;top:683px" width="15" height="15" viewBox="0 0 15 15"><rect x="0.7" y="0.7" width="13.4" height="13.4" fill="#d9e9f8" stroke="#787878" stroke-width="1.4"/><rect x="0.7" y="0.7" width="13.4" height="2.6" fill="#5b8fc9"/><path d="M3.5 6H10.5M3.5 8.5H9M3.5 11H10.5" stroke="#5e6a76" stroke-width="1"/></svg>
<span class="t s" style="left:110px;top:678.5px;letter-spacing:-0.078px;color:#222;">Console</span>
<svg class="a" style="left:159px;top:686px" width="12" height="9" viewBox="0 0 12 9"><path d="M0.5 6H7" stroke="#7a7a7a" stroke-width="1"/><path d="M4.6 3.6L7.2 6L4.6 8.4" stroke="#7a7a7a" stroke-width="1" fill="none"/><rect x="8.6" y="1" width="2.6" height="2.6" fill="#6e6e6e"/></svg>
<svg class="a" style="left:178px;top:683px" width="16" height="15" viewBox="0 0 16 15"><path d="M0.8 0.6L6.6 5.4L0.8 10.2z" fill="#e0604f"/><path d="M8 3.4H14.8M8 6H14.8M8 8.6H14.8" stroke="#7b7b7b" stroke-width="1.2"/><path d="M4 11.2H14.8M4 13.8H14.8" stroke="#4e87b8" stroke-width="1.4"/></svg>
<div class="a" style="left:202px;top:681px;width:1px;height:21px;background:#c6c6c6;"></div>
<svg class="a" style="left:209px;top:682px" width="16" height="16" viewBox="0 0 16 16"><path d="M0.8 1.2H15" stroke="#7b7b7b" stroke-width="1.4"/><path d="M0.8 14.2H15" stroke="#7b7b7b" stroke-width="1.6"/><path d="M6 3H10V7.4H12.8L8 12L3.2 7.4H6z" fill="#3b95cc"/></svg>
<svg class="a" style="left:234px;top:682px" width="16" height="16" viewBox="0 0 16 16"><path d="M0.8 14.2H15" stroke="#7b7b7b" stroke-width="1.6"/><path d="M1 3.2L4 0.6L9.6 6.4L12.4 3.6V12H4L6.8 9.2z" fill="#3b95cc"/></svg>
<svg class="a" style="left:259px;top:682px" width="16" height="16" viewBox="0 0 16 16"><path d="M0.8 14.2H15" stroke="#7b7b7b" stroke-width="1.6"/><path d="M0.6 2.4C4 0.8 8 2.4 10 6L12.6 3.8V12H4.4L7 9C5.6 6.2 3.4 4.4 0.6 4.4z" fill="#e0604f"/></svg>
<svg class="a" style="left:284px;top:682px" width="16" height="16" viewBox="0 0 16 16"><path d="M0.8 14.2H15" stroke="#7b7b7b" stroke-width="1.6"/><path d="M2.4 11.6L8.4 5.4L5.6 2.6H14V11L11.2 8.2L5.2 14z" fill="#3b95cc" transform="translate(0,-2.2)"/></svg>
<svg class="a" style="left:309px;top:682px" width="17" height="17" viewBox="0 0 17 17"><path d="M0.6 2L2.6 0.2L6.6 4.2L8.6 2.2V8.6H2.2L4.4 6.4z" fill="#3b95cc"/><path d="M9.4 5.4C10.6 5.4 11.4 5.8 11.8 6.4C12.2 5.8 13 5.4 14.2 5.4M9.4 15.6C10.6 15.6 11.4 15.2 11.8 14.6C12.2 15.2 13 15.6 14.2 15.6M11.8 6.4V14.6" stroke="#2b2b2b" stroke-width="1.1" fill="none"/></svg>
<div class="a" style="left:333px;top:681px;width:1px;height:21px;background:#c6c6c6;"></div>
<svg class="a" style="left:342px;top:684px" width="14" height="13" viewBox="0 0 14 13"><rect x="0.6" y="0.6" width="12.8" height="11.6" fill="#f4f4f4" stroke="#808080" stroke-width="1.2"/><rect x="1.8" y="1.8" width="10.4" height="2.6" fill="#5080b8"/><path d="M2.4 6.8H4.4M5.6 6.8H7.6M2.4 9.6H4.4M5.6 9.6H7.6" stroke="#7a7a7a" stroke-width="1.2"/><path d="M8.8 6.8H11.6" stroke="#7a7a7a" stroke-width="1.2"/><path d="M8.8 9.6H11.6" stroke="#3fae49" stroke-width="1.4"/></svg>
<div class="a" style="left:366px;top:684px;width:14px;height:14px;background:#f2c571;border-radius:7px;"></div>
<span class="t " style="left:366px;top:681px;width:14px;text-align:center;font-size:10px;font-weight:bold;color:#9a6a1f;line-height:19px;height:19px;">@</span>
<div class="a" style="left:387px;top:680px;width:23px;height:22px;background:#d0d0d0;border:1px solid #a9a9a9;border-radius:3px;box-sizing:border-box;"></div>
<svg class="a" style="left:391px;top:683px" width="16" height="16" viewBox="0 0 16 16"><rect x="6.5" y="1" width="8" height="3" fill="#f8f8f8" stroke="#6e6e6e"/><rect x="6.5" y="6" width="8" height="3" fill="#f8f8f8" stroke="#6e6e6e"/><rect x="6.5" y="11" width="8" height="3" fill="#f8f8f8" stroke="#9a9a9a"/><path d="M2.4 0.6V4.2M1.2 1.6L2.4 0.6M1 6H3.4V7.6H1.2V9.4H3.6M1 11H3.4V12.6H2M3.4 12.6V14.4H1" stroke="#2a5f93" stroke-width="1" fill="none"/><path d="M0.6 15.4L15.6 0.6" stroke="#1e4f80" stroke-width="1.2"/></svg>
<svg class="a" style="left:416px;top:683px" width="15" height="15" viewBox="0 0 15 15"><path d="M4.6 3.4V1.4H10.6" stroke="#5a5a5a" stroke-width="1.3" fill="none"/><path d="M9.8 0L13.4 1.6L9.8 3.6z" fill="#3a3a3a" transform="translate(0.6,-0.2)"/><rect x="1.2" y="4.4" width="7.4" height="9.4" fill="#fbeceb" stroke="#cf4a40" stroke-width="1.8"/><path d="M3.4 7.4H6.6M3.4 9.4H6.6M3.4 11.4H6.6" stroke="#6a6a6a" stroke-width="0.9"/></svg>
<svg class="a" style="left:1px;top:684px" width="15" height="15" viewBox="0 0 15 15"><path d="M5 0.6L14.6 7.4L5 14.2z" fill="#3ea845"/><path d="M0.4 1.6H4M0.4 4H4M0.4 6.4H4M0.4 8.8H4M0.4 11.2H4M0.4 13.4H4" stroke="#6e6e6e" stroke-width="1"/></svg>
<div class="a" style="left:1px;top:710px;width:12px;height:12px;background:#e4625a;"></div>
<div class="a" style="left:0px;top:732px;width:19px;height:1px;background:#c8c8c8;"></div>
<svg class="a" style="left:0px;top:739px" width="17" height="16" viewBox="0 0 17 16"><circle cx="5" cy="4.6" r="4.2" fill="#ea8a7f"/><circle cx="5" cy="10.4" r="4.6" fill="#e0604f"/><circle cx="13.4" cy="5.6" r="1.7" fill="#d8d8d8" stroke="#8a8a8a" stroke-width="0.9"/><circle cx="13.4" cy="10.8" r="1.7" fill="#d8d8d8" stroke="#8a8a8a" stroke-width="0.9"/></svg>
<svg class="a" style="left:0px;top:764px" width="16" height="16" viewBox="0 0 16 16"><circle cx="7.6" cy="8" r="6.3" fill="#e77468" stroke="#6a6a6a" stroke-width="1.1"/><path d="M3.2 12.6L12.2 3.6" stroke="#f0f0f0" stroke-width="2.4"/><path d="M2.6 12L11.4 3M4 13.2L12.8 4.2" stroke="#6a6a6a" stroke-width="0.9"/></svg>
<div class="a" style="left:0px;top:788px;width:19px;height:1px;background:#c8c8c8;"></div>
<svg class="a" style="left:0px;top:795px" width="15" height="15" viewBox="0 0 15 15"><rect x="0.6" y="0.8" width="8" height="5.8" fill="#d5e6f6" stroke="#6e8db0" stroke-width="1.1"/><rect x="10.6" y="0.8" width="3.4" height="5.8" fill="#f4f4f4" stroke="#7a7a7a" stroke-width="1.1"/><rect x="0.6" y="9" width="13.4" height="4.8" fill="#f4f4f4" stroke="#7a7a7a" stroke-width="1.1"/><path d="M2.4 3.6H6.8" stroke="#5b8fc9" stroke-width="1.4"/></svg>
<svg class="a" style="left:0px;top:821px" width="14" height="14" viewBox="0 0 14 14"><path d="M9.90 6.50L12.80 6.50M8.90 8.90L10.95 10.95M6.50 9.90L6.50 12.80M4.10 8.90L2.05 10.95M3.10 6.50L0.20 6.50M4.10 4.10L2.05 2.05M6.50 3.10L6.50 0.20M8.90 4.10L10.95 2.05" stroke="#3f8fc6" stroke-width="2.4"/><circle cx="6.5" cy="6.5" r="3.3" fill="none" stroke="#3f8fc6" stroke-width="2.4"/></svg>
<svg class="a" style="left:12px;top:833px" width="6" height="4" viewBox="0 0 6 4"><path d="M0 0H5.4L2.7 3.4z" fill="#555"/></svg>
<div class="a" style="left:0px;top:844px;width:19px;height:1px;background:#c8c8c8;"></div>
<svg class="a" style="left:0px;top:851px" width="15" height="15" viewBox="0 0 15 15"><path d="M0.4 14.4L5.4 9.4" stroke="#7a7a7a" stroke-width="1.4"/><ellipse cx="9.6" cy="5.2" rx="5.2" ry="3.1" fill="#a36fc2" transform="rotate(-45 9.6 5.2)"/><ellipse cx="7.2" cy="7.6" rx="3.6" ry="1.7" fill="#7f7f86" transform="rotate(45 7.2 7.6)"/><ellipse cx="11.4" cy="3.4" rx="3.4" ry="1.5" fill="#b98ad4" transform="rotate(45 11.4 3.4)"/></svg>
<svg class="a" style="left:1px;top:878px" width="13" height="12" viewBox="0 0 13 12"><path d="M1.2 1L11.6 11M11.6 1L1.2 11" stroke="#e0584d" stroke-width="2.3" fill="none"/></svg>
<span class="t " style="left:2.5px;top:899px;font-size:17px;font-weight:bold;color:#3d8fca;">?</span>
<div class="a" style="left:23px;top:708px;width:769px;height:1px;background:#9a9a9a;"></div>
<div class="a" style="left:23px;top:709px;width:769px;height:27px;background:#c7cfe1;"></div>
<div class="a" style="left:23px;top:736px;width:769px;height:1px;background:#979797;"></div>
<svg class="a" style="left:28px;top:713.5px" width="14" height="14" viewBox="0 0 14 14"><rect x="0.5" y="0.5" width="9" height="9" fill="#f6f6f6" stroke="#a8a8a8"/><rect x="1.5" y="2" width="10" height="9.5" fill="#ededed" stroke="#8c8c8c"/><rect x="3" y="4.5" width="10" height="8.5" fill="#b9d9f1" stroke="#6f6f6f" stroke-width="1.2"/><path d="M6.8 7L5.3 8.2L6.8 9.4M9.2 8.4L10.7 9.6L9.2 10.8" stroke="#4a5560" stroke-width="0.9" fill="none"/></svg>
<span class="t s" style="left:46.5px;top:709.5px;letter-spacing:-0.449px;color:#000;">Frames</span>
<svg class="a" style="left:778px;top:717px" width="12" height="9" viewBox="0 0 12 9"><path d="M0.5 6H7" stroke="#6a6a6a" stroke-width="1"/><path d="M4.6 3.6L7.2 6L4.6 8.4" stroke="#6a6a6a" stroke-width="1" fill="none"/><rect x="8.6" y="1" width="2.6" height="2.6" fill="#5e5e5e"/></svg>
<div class="a" style="left:23px;top:737px;width:769px;height:27px;background:#e8e8e8;"></div>
<svg class="a" style="left:748px;top:744px" width="12" height="12" viewBox="0 0 12 12"><path d="M6 0.4L11.6 6.2H8V11.4H4V6.2H0.4z" fill="#c2c2c2"/></svg>
<svg class="a" style="left:773px;top:744px" width="12" height="12" viewBox="0 0 12 12"><path d="M6 11.6L11.6 5.8H8V0.6H4V5.8H0.4z" fill="#3a94cc"/></svg>
<div class="a" style="left:23px;top:764px;width:769px;height:229px;background:#ffffff;"></div>
<div class="a" style="left:23px;top:764px;width:769px;height:21px;background:#3875d6;"></div>
<svg class="a" style="left:26.5px;top:768px" width="14" height="14" viewBox="0 0 14 14"><rect x="0.5" y="0.5" width="9" height="9" fill="#f6f6f6" stroke="#a8a8a8"/><rect x="1.5" y="2" width="10" height="9.5" fill="#ededed" stroke="#8c8c8c"/><rect x="3" y="4.5" width="10" height="8.5" fill="#b9d9f1" stroke="#6f6f6f" stroke-width="1.2"/><path d="M6.8 7L5.3 8.2L6.8 9.4M9.2 8.4L10.7 9.6L9.2 10.8" stroke="#4a5560" stroke-width="0.9" fill="none"/></svg>
<span class="t " style="left:44.4px;top:764px;letter-spacing:-0.116px;color:#fff;">list.php:508,</span>
<span class="t it" style="left:118px;top:764px;letter-spacing:0.087px;color:#fff;">JModelList-&gt;populateState()</span>
<svg class="a" style="left:26.5px;top:789px" width="14" height="14" viewBox="0 0 14 14"><rect x="0.5" y="0.5" width="9" height="9" fill="#f6f6f6" stroke="#a8a8a8"/><rect x="1.5" y="2" width="10" height="9.5" fill="#ededed" stroke="#8c8c8c"/><rect x="3" y="4.5" width="10" height="8.5" fill="#b9d9f1" stroke="#6f6f6f" stroke-width="1.2"/><path d="M6.8 7L5.3 8.2L6.8 9.4M9.2 8.4L10.7 9.6L9.2 10.8" stroke="#4a5560" stroke-width="0.9" fill="none"/></svg>
<span class="t " style="left:44.4px;top:785px;letter-spacing:-0.053px;color:#000;">fields.php:76,</span>
<span class="t it" style="left:126px;top:785px;letter-spacing:0.042px;color:#000;">FieldsModelFields-&gt;populateState()</span>
<svg class="a" style="left:26.5px;top:810px" width="14" height="14" viewBox="0 0 14 14"><rect x="0.5" y="0.5" width="9" height="9" fill="#f6f6f6" stroke="#a8a8a8"/><rect x="1.5" y="2" width="10" height="9.5" fill="#ededed" stroke="#8c8c8c"/><rect x="3" y="4.5" width="10" height="8.5" fill="#b9d9f1" stroke="#6f6f6f" stroke-width="1.2"/><path d="M6.8 7L5.3 8.2L6.8 9.4M9.2 8.4L10.7 9.6L9.2 10.8" stroke="#4a5560" stroke-width="0.9" fill="none"/></svg>
<span class="t " style="left:44.4px;top:806px;letter-spacing:-0.116px;color:#000;">legacy.php:434,</span>
<span class="t it" style="left:138.5px;top:806px;letter-spacing:0.036px;color:#000;">JModelLegacy-&gt;getState()</span>
<svg class="a" style="left:26.5px;top:831px" width="14" height="14" viewBox="0 0 14 14"><rect x="0.5" y="0.5" width="9" height="9" fill="#f6f6f6" stroke="#a8a8a8"/><rect x="1.5" y="2" width="10" height="9.5" fill="#ededed" stroke="#8c8c8c"/><rect x="3" y="4.5" width="10" height="8.5" fill="#b9d9f1" stroke="#6f6f6f" stroke-width="1.2"/><path d="M6.8 7L5.3 8.2L6.8 9.4M9.2 8.4L10.7 9.6L9.2 10.8" stroke="#4a5560" stroke-width="0.9" fill="none"/></svg>
<span class="t " style="left:44.4px;top:827px;letter-spacing:-0.116px;color:#000;">legacy.php:422,</span>
<span class="t it" style="left:138.5px;top:827px;letter-spacing:-0.084px;color:#000;">JViewLegacy-&gt;get()</span>
<svg class="a" style="left:26.5px;top:852px" width="14" height="14" viewBox="0 0 14 14"><rect x="0.5" y="0.5" width="9" height="9" fill="#f6f6f6" stroke="#a8a8a8"/><rect x="1.5" y="2" width="10" height="9.5" fill="#ededed" stroke="#8c8c8c"/><rect x="3" y="4.5" width="10" height="8.5" fill="#b9d9f1" stroke="#6f6f6f" stroke-width="1.2"/><path d="M6.8 7L5.3 8.2L6.8 9.4M9.2 8.4L10.7 9.6L9.2 10.8" stroke="#4a5560" stroke-width="0.9" fill="none"/></svg>
<span class="t " style="left:44.4px;top:848px;letter-spacing:-0.109px;color:#000;">view.html.php:72,</span>
<span class="t it" style="left:148px;top:848px;letter-spacing:-0.076px;color:#000;">FieldsViewFields-&gt;display()</span>
<svg class="a" style="left:26.5px;top:873px" width="14" height="14" viewBox="0 0 14 14"><rect x="0.5" y="0.5" width="9" height="9" fill="#f6f6f6" stroke="#a8a8a8"/><rect x="1.5" y="2" width="10" height="9.5" fill="#ededed" stroke="#8c8c8c"/><rect x="3" y="4.5" width="10" height="8.5" fill="#b9d9f1" stroke="#6f6f6f" stroke-width="1.2"/><path d="M6.8 7L5.3 8.2L6.8 9.4M9.2 8.4L10.7 9.6L9.2 10.8" stroke="#4a5560" stroke-width="0.9" fill="none"/></svg>
<span class="t " style="left:44.4px;top:869px;letter-spacing:-0.116px;color:#000;">legacy.php:671,</span>
<span class="t it" style="left:138.5px;top:869px;letter-spacing:0.024px;color:#000;">JControllerLegacy-&gt;display()</span>
<svg class="a" style="left:26.5px;top:894px" width="14" height="14" viewBox="0 0 14 14"><rect x="0.5" y="0.5" width="9" height="9" fill="#f6f6f6" stroke="#a8a8a8"/><rect x="1.5" y="2" width="10" height="9.5" fill="#ededed" stroke="#8c8c8c"/><rect x="3" y="4.5" width="10" height="8.5" fill="#b9d9f1" stroke="#6f6f6f" stroke-width="1.2"/><path d="M6.8 7L5.3 8.2L6.8 9.4M9.2 8.4L10.7 9.6L9.2 10.8" stroke="#4a5560" stroke-width="0.9" fill="none"/></svg>
<span class="t " style="left:44.4px;top:890px;letter-spacing:-0.116px;color:#000;">legacy.php:709,</span>
<span class="t it" style="left:138.5px;top:890px;letter-spacing:-0.053px;color:#000;">JControllerLegacy-&gt;execute()</span>
<svg class="a" style="left:26.5px;top:915px" width="14" height="14" viewBox="0 0 14 14"><rect x="0.5" y="0.5" width="9" height="9" fill="#f6f6f6" stroke="#a8a8a8"/><rect x="1.5" y="2" width="10" height="9.5" fill="#ededed" stroke="#8c8c8c"/><rect x="3" y="4.5" width="10" height="8.5" fill="#b9d9f1" stroke="#6f6f6f" stroke-width="1.2"/><path d="M6.8 7L5.3 8.2L6.8 9.4M9.2 8.4L10.7 9.6L9.2 10.8" stroke="#4a5560" stroke-width="0.9" fill="none"/></svg>
<span class="t " style="left:44.4px;top:911px;letter-spacing:-0.053px;color:#000;">fields.php:14,</span>
<span class="t it" style="left:126px;top:911px;letter-spacing:-0.11px;color:#000;">require_once()</span>
<svg class="a" style="left:26.5px;top:936px" width="14" height="14" viewBox="0 0 14 14"><rect x="0.5" y="0.5" width="9" height="9" fill="#f6f6f6" stroke="#a8a8a8"/><rect x="1.5" y="2" width="10" height="9.5" fill="#ededed" stroke="#8c8c8c"/><rect x="3" y="4.5" width="10" height="8.5" fill="#b9d9f1" stroke="#6f6f6f" stroke-width="1.2"/><path d="M6.8 7L5.3 8.2L6.8 9.4M9.2 8.4L10.7 9.6L9.2 10.8" stroke="#4a5560" stroke-width="0.9" fill="none"/></svg>
<span class="t " style="left:44.4px;top:932px;letter-spacing:-0.036px;color:#000;">helper.php:394,</span>
<span class="t it" style="left:138.5px;top:932px;letter-spacing:-0.065px;color:#000;">JComponentHelper::executeComponent()</span>
<svg class="a" style="left:26.5px;top:957px" width="14" height="14" viewBox="0 0 14 14"><rect x="0.5" y="0.5" width="9" height="9" fill="#f6f6f6" stroke="#a8a8a8"/><rect x="1.5" y="2" width="10" height="9.5" fill="#ededed" stroke="#8c8c8c"/><rect x="3" y="4.5" width="10" height="8.5" fill="#b9d9f1" stroke="#6f6f6f" stroke-width="1.2"/><path d="M6.8 7L5.3 8.2L6.8 9.4M9.2 8.4L10.7 9.6L9.2 10.8" stroke="#4a5560" stroke-width="0.9" fill="none"/></svg>
<span class="t " style="left:44.4px;top:953px;letter-spacing:-0.036px;color:#000;">helper.php:369,</span>
<span class="t it" style="left:138.5px;top:953px;letter-spacing:0.018px;color:#000;">JComponentHelper::renderComponent()</span>
<svg class="a" style="left:26.5px;top:978px" width="14" height="14" viewBox="0 0 14 14"><rect x="0.5" y="0.5" width="9" height="9" fill="#f6f6f6" stroke="#a8a8a8"/><rect x="1.5" y="2" width="10" height="9.5" fill="#ededed" stroke="#8c8c8c"/><rect x="3" y="4.5" width="10" height="8.5" fill="#b9d9f1" stroke="#6f6f6f" stroke-width="1.2"/><path d="M6.8 7L5.3 8.2L6.8 9.4M9.2 8.4L10.7 9.6L9.2 10.8" stroke="#4a5560" stroke-width="0.9" fill="none"/></svg>
<span class="t " style="left:44.4px;top:974px;letter-spacing:-0.219px;color:#000;">site.php:191,</span>
<span class="t it" style="left:121px;top:974px;letter-spacing:0.068px;color:#000;">JApplicationSite-&gt;dispatch()</span>
<div class="a" style="left:792px;top:708px;width:1px;height:285px;background:#9a9a9a;"></div>
<div class="a" style="left:793px;top:708px;width:966px;height:1px;background:#9a9a9a;"></div>
<div class="a" style="left:793px;top:709px;width:966px;height:27px;background:#c7cfe1;"></div>
<div class="a" style="left:793px;top:736px;width:966px;height:1px;background:#979797;"></div>
<svg class="a" style="left:798.5px;top:715px" width="13" height="13" viewBox="0 0 13 13"><rect x="0.5" y="0.6" width="12" height="3" fill="#c39c5f"/><rect x="0.5" y="5" width="12" height="3" fill="#c39c5f"/><rect x="0.5" y="9.4" width="12" height="3" fill="#c39c5f"/></svg>
<span class="t s" style="left:816px;top:709.5px;letter-spacing:-0.02px;color:#000;">Variables</span>
<div class="a" style="left:793px;top:737px;width:25px;height:256px;background:#ebebeb;"></div>
<div class="a" style="left:818px;top:737px;width:1px;height:256px;background:#c2c2c2;"></div>
<div class="a" style="left:819px;top:737px;width:940px;height:256px;background:#ffffff;"></div>
<svg class="a" style="left:798px;top:742px" width="16" height="16" viewBox="0 0 16 16"><path d="M5 0.4V9.6M0.6 4.8H9.6" stroke="#3a9a3f" stroke-width="2"/><circle cx="4.4" cy="11.6" r="2.6" fill="#9fd09a" stroke="#4a7a4a" stroke-width="1"/><circle cx="10.4" cy="11.6" r="2.6" fill="#9fd09a" stroke="#4a7a4a" stroke-width="1"/><path d="M12.8 10.4C13.6 8 14.6 7.2 15.6 8" stroke="#6a6a6a" stroke-width="0.9" fill="none"/></svg>
<div class="a" style="left:800px;top:773px;width:12px;height:2px;background:#c2c2c2;"></div>
<svg class="a" style="left:800px;top:793.5px" width="12" height="12" viewBox="0 0 12 12"><path d="M6 0.4L11.6 6.2H8V11.4H4V6.2H0.4z" fill="#c2c2c2"/></svg>
<svg class="a" style="left:800px;top:818px" width="12" height="12" viewBox="0 0 12 12"><path d="M6 11.6L11.6 5.8H8V0.6H4V5.8H0.4z" fill="#c2c2c2"/></svg>
<svg class="a" style="left:798px;top:841px" width="15" height="16" viewBox="0 0 15 16"><path d="M4.6 0.8H10.6L13.8 4V12.4H4.6z" fill="#eef3f8" stroke="#8a949e" stroke-width="1.1"/><path d="M0.8 3.6H6.4L8.4 5.6V15H0.8z" fill="#f7fbff" stroke="#4d86b6" stroke-width="1.3"/></svg>
<div class="a" style="left:794px;top:863px;width:23px;height:23px;background:#d2d2d2;border:1px solid #b0b0b0;border-radius:3px;box-sizing:border-box;"></div>
<svg class="a" style="left:797px;top:866px" width="17" height="16" viewBox="0 0 17 16"><rect x="1.6" y="0.8" width="13.6" height="10" fill="#e6eef6" stroke="#9aa4ae" stroke-width="0.9"/><rect x="1.6" y="0.8" width="13.6" height="2.4" fill="#5b8fc9"/><circle cx="4.4" cy="11.6" r="2.8" fill="#9fd09a" stroke="#4a7a4a" stroke-width="1"/><circle cx="11" cy="11.6" r="2.8" fill="#9fd09a" stroke="#4a7a4a" stroke-width="1"/><path d="M4 8.8C5 5.6 6.4 5 7.6 6.2M13.4 10.2C14.2 7.6 15.2 7 16.2 7.8" stroke="#5a5a5a" stroke-width="0.9" fill="none"/></svg>
<svg class="a" style="left:823px;top:742.5px" width="9" height="10" viewBox="0 0 9 10"><path d="M0.5 0.3L8.3 5L0.5 9.7z" fill="#9c9c9c"/></svg>
<svg class="a" style="left:842.5px;top:741.5px" width="13" height="13" viewBox="0 0 13 13"><rect x="0.5" y="0.6" width="12" height="3" fill="#c39c5f"/><rect x="0.5" y="5" width="12" height="3" fill="#c39c5f"/><rect x="0.5" y="9.4" width="12" height="3" fill="#c39c5f"/></svg>
<span class="t " style="left:860.4px;top:737px;letter-spacing:0.014px;"><span class="vn">$this</span> = <span class="vg">{FieldsModelFields}</span> [15]</span>
<svg class="a" style="left:823px;top:763.5px" width="9" height="10" viewBox="0 0 9 10"><path d="M0.5 0.3L8.3 5L0.5 9.7z" fill="#9c9c9c"/></svg>
<svg class="a" style="left:842.5px;top:762.5px" width="13" height="13" viewBox="0 0 13 13"><rect x="0.5" y="0.6" width="12" height="3" fill="#c39c5f"/><rect x="0.5" y="5" width="12" height="3" fill="#c39c5f"/><rect x="0.5" y="9.4" width="12" height="3" fill="#c39c5f"/></svg>
<span class="t " style="left:860.4px;top:758px;letter-spacing:0.046px;"><span class="vn">$app</span> = <span class="vg">{JApplicationSite}</span> [26]</span>
<svg class="a" style="left:842.5px;top:783px" width="13" height="13" viewBox="0 0 13 13"><rect x="0.6" y="0.6" width="11.8" height="11.8" fill="#fbfbfb" stroke="#7c7c7c" stroke-width="1.1"/><text x="6.5" y="6.2" font-family="Liberation Sans,sans-serif" font-size="5.6" font-weight="bold" fill="#4b5d73" text-anchor="middle">10</text><text x="6.5" y="11.2" font-family="Liberation Sans,sans-serif" font-size="5.6" font-weight="bold" fill="#4b5d73" text-anchor="middle">01</text></svg>
<span class="t " style="left:860.4px;top:779px;letter-spacing:-0.013px;"><span class="vn">$direction</span> = <span class="vs">"asc"</span></span>
<svg class="a" style="left:841.5px;top:803.5px" width="14" height="14" viewBox="0 0 14 14"><rect x="5.5" y="0.6" width="7.8" height="3" fill="#fff" stroke="#6e6e6e" stroke-width="1"/><rect x="5.5" y="5.4" width="7.8" height="3" fill="#fff" stroke="#6e6e6e" stroke-width="1"/><rect x="5.5" y="10.2" width="7.8" height="3" fill="#fff" stroke="#6e6e6e" stroke-width="1"/><path d="M1.6 0.3V3.8M0.3 1.3L1.6 0.3M0.2 5.4H2.4V7H0.4V8.8H2.6M0.2 10.2H2.4V11.7H1M2.4 11.7V13.5H0.2" stroke="#2a5f93" stroke-width="0.9" fill="none"/></svg>
<span class="t " style="left:860.4px;top:800px;letter-spacing:0.122px;"><span class="vn">$filters</span> = <span class="vg">{array}</span> [0]</span>
<svg class="a" style="left:823px;top:826.5px" width="9" height="10" viewBox="0 0 9 10"><path d="M0.5 0.3L8.3 5L0.5 9.7z" fill="#9c9c9c"/></svg>
<svg class="a" style="left:842.5px;top:825.5px" width="13" height="13" viewBox="0 0 13 13"><rect x="0.5" y="0.6" width="12" height="3" fill="#c39c5f"/><rect x="0.5" y="5" width="12" height="3" fill="#c39c5f"/><rect x="0.5" y="9.4" width="12" height="3" fill="#c39c5f"/></svg>
<span class="t " style="left:860.4px;top:821px;letter-spacing:0.009px;"><span class="vn">$inputFilter</span> = <span class="vg">{JFilterInput}</span> [9]</span>
<svg class="a" style="left:842.5px;top:846px" width="13" height="13" viewBox="0 0 13 13"><rect x="0.6" y="0.6" width="11.8" height="11.8" fill="#fbfbfb" stroke="#7c7c7c" stroke-width="1.1"/><text x="6.5" y="6.2" font-family="Liberation Sans,sans-serif" font-size="5.6" font-weight="bold" fill="#4b5d73" text-anchor="middle">10</text><text x="6.5" y="11.2" font-family="Liberation Sans,sans-serif" font-size="5.6" font-weight="bold" fill="#4b5d73" text-anchor="middle">01</text></svg>
<span class="t " style="left:860.4px;top:842px;letter-spacing:0.249px;"><span class="vn">$limit</span> = <span class="vb">0</span></span>
<svg class="a" style="left:822px;top:870px" width="10" height="9" viewBox="0 0 10 9"><path d="M0.3 0.5H9.7L5 8.3z" fill="#9c9c9c"/></svg>
<svg class="a" style="left:841.5px;top:866.5px" width="14" height="14" viewBox="0 0 14 14"><rect x="5.5" y="0.6" width="7.8" height="3" fill="#fff" stroke="#6e6e6e" stroke-width="1"/><rect x="5.5" y="5.4" width="7.8" height="3" fill="#fff" stroke="#6e6e6e" stroke-width="1"/><rect x="5.5" y="10.2" width="7.8" height="3" fill="#fff" stroke="#6e6e6e" stroke-width="1"/><path d="M1.6 0.3V3.8M0.3 1.3L1.6 0.3M0.2 5.4H2.4V7H0.4V8.8H2.6M0.2 10.2H2.4V11.7H1M2.4 11.7V13.5H0.2" stroke="#2a5f93" stroke-width="0.9" fill="none"/></svg>
<span class="t " style="left:860.4px;top:863px;letter-spacing:0.098px;"><span class="vn">$list</span> = <span class="vg">{array}</span> [1]</span>
<svg class="a" style="left:862.5px;top:888px" width="13" height="13" viewBox="0 0 13 13"><rect x="0.6" y="0.6" width="11.8" height="11.8" fill="#fbfbfb" stroke="#7c7c7c" stroke-width="1.1"/><text x="6.5" y="6.2" font-family="Liberation Sans,sans-serif" font-size="5.6" font-weight="bold" fill="#4b5d73" text-anchor="middle">10</text><text x="6.5" y="11.2" font-family="Liberation Sans,sans-serif" font-size="5.6" font-weight="bold" fill="#4b5d73" text-anchor="middle">01</text></svg>
<span class="t " style="left:880.4px;top:884px;letter-spacing:0.07px;"><span class="vn">fullordering</span> = <span class="vs">"updatexml(1,concat(0x3e,user()),0)"</span></span>
<svg class="a" style="left:842.5px;top:909px" width="13" height="13" viewBox="0 0 13 13"><rect x="0.6" y="0.6" width="11.8" height="11.8" fill="#fbfbfb" stroke="#7c7c7c" stroke-width="1.1"/><text x="6.5" y="6.2" font-family="Liberation Sans,sans-serif" font-size="5.6" font-weight="bold" fill="#4b5d73" text-anchor="middle">10</text><text x="6.5" y="11.2" font-family="Liberation Sans,sans-serif" font-size="5.6" font-weight="bold" fill="#4b5d73" text-anchor="middle">01</text></svg>
<span class="t " style="left:860.4px;top:905px;letter-spacing:0.099px;"><span class="vn">$name</span> = <span class="vs">"fullordering"</span></span>
<svg class="a" style="left:842.5px;top:930px" width="13" height="13" viewBox="0 0 13 13"><rect x="0.6" y="0.6" width="11.8" height="11.8" fill="#fbfbfb" stroke="#7c7c7c" stroke-width="1.1"/><text x="6.5" y="6.2" font-family="Liberation Sans,sans-serif" font-size="5.6" font-weight="bold" fill="#4b5d73" text-anchor="middle">10</text><text x="6.5" y="11.2" font-family="Liberation Sans,sans-serif" font-size="5.6" font-weight="bold" fill="#4b5d73" text-anchor="middle">01</text></svg>
<span class="t " style="left:860.4px;top:926px;letter-spacing:0.143px;"><span class="vn">$ordering</span> = <span class="vs">"a.ordering"</span></span>
<svg class="a" style="left:823px;top:952.5px" width="9" height="10" viewBox="0 0 9 10"><path d="M0.5 0.3L8.3 5L0.5 9.7z" fill="#9c9c9c"/></svg>
<svg class="a" style="left:841.5px;top:950.5px" width="14" height="14" viewBox="0 0 14 14"><rect x="5.5" y="0.6" width="7.8" height="3" fill="#fff" stroke="#6e6e6e" stroke-width="1"/><rect x="5.5" y="5.4" width="7.8" height="3" fill="#fff" stroke="#6e6e6e" stroke-width="1"/><rect x="5.5" y="10.2" width="7.8" height="3" fill="#fff" stroke="#6e6e6e" stroke-width="1"/><path d="M1.6 0.3V3.8M0.3 1.3L1.6 0.3M0.2 5.4H2.4V7H0.4V8.8H2.6M0.2 10.2H2.4V11.7H1M2.4 11.7V13.5H0.2" stroke="#2a5f93" stroke-width="0.9" fill="none"/></svg>
<span class="t " style="left:860.4px;top:947px;letter-spacing:0.129px;"><span class="vc">$orderingParts</span> = <span class="vg">{array}</span> [1]</span>
<div class="a" style="left:819px;top:968px;width:940px;height:21px;background:#d4d4d4;"></div>
<svg class="a" style="left:823px;top:973.5px" width="9" height="10" viewBox="0 0 9 10"><path d="M0.5 0.3L8.3 5L0.5 9.7z" fill="#b0b0b0"/></svg>
<svg class="a" style="left:842.5px;top:972.5px" width="13" height="13" viewBox="0 0 13 13"><rect x="0.5" y="0.6" width="12" height="3" fill="#c39c5f"/><rect x="0.5" y="5" width="12" height="3" fill="#c39c5f"/><rect x="0.5" y="9.4" width="12" height="3" fill="#c39c5f"/></svg>
<span class="t " style="left:860.4px;top:968px;letter-spacing:0.014px;"><span class="vn">$this</span> = <span class="vg">{FieldsModelFields}</span> [15]</span>
<svg class="a" style="left:1190px;top:840px" width="120" height="60" viewBox="0 0 120 60"><path d="M112.2 6.1L20.6 43.2L17.6 39.3L6.2 52.5L25 53.9L23.3 49.9z" fill="#fa3636"/></svg>
<div class="a" style="left:1737px;top:944px;width:56px;height:56px;background:linear-gradient(#1f8a57 0,#2a9a5f 27%,#3cc65c 27%,#34bb55 100%);border-radius:28px;border:2px solid #e6e6e6;box-sizing:border-box;box-shadow:0 0 2px rgba(0,0,0,.45);"></div>
<span class="t " style="left:1745.5px;top:957px;color:#fff;font-size:13.5px;">68</span>
<span class="t wm" style="left:1589px;top:964.5px;letter-spacing:0.398px;">安全客 ( bobao.360.cn )</span>
</body></html>
